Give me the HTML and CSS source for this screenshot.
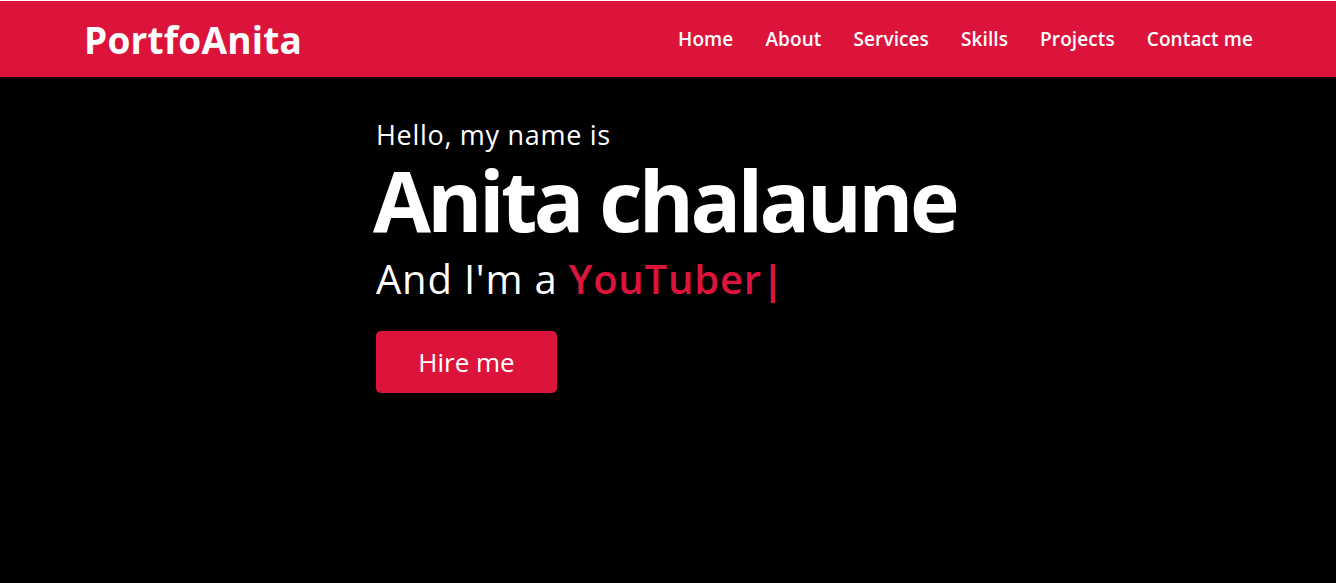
FILE: index.html
```html
<!DOCTYPE html>
<html lang="en">
<head>
<meta charset="utf-8">
<title>PortfoAnita</title>
<link rel="stylesheet" href="styles.css">
</head>
<body>
<nav class="navbar">
  <div class="logo">PortfoAnita</div>
  <ul class="menu">
    <li><a href="#">Home</a></li>
    <li><a href="#">About</a></li>
    <li><a href="#">Services</a></li>
    <li><a href="#">Skills</a></li>
    <li><a href="#">Projects</a></li>
    <li><a href="#">Contact me</a></li>
  </ul>
</nav>
<section class="home">
  <div class="home-content">
    <div class="text-1">Hello, my name is</div>
    <div class="text-2">Anita chalaune</div>
    <div class="text-3">And I'm a <span class="typing">YouTuber</span><span class="cursor">|</span></div>
    <a class="hire" href="#">Hire me</a>
  </div>
</section>
</body>
</html>
```

FILE: styles.css
```css
* { box-sizing: border-box; margin: 0; padding: 0; }
html, body { height: 100%; }
body {
  background: #000;
  font-family: "Open Sans", "Noto Sans", sans-serif;
  color: #fff;
  display: flex;
  flex-direction: column;
}
.navbar {
  border-top: 1px solid #fff;
  background: #dc143c;
  height: 77px;
  display: flex;
  align-items: center;
  justify-content: space-between;
  padding: 0 83px 0 84px;
}
.logo {
  font-size: 37px;
  font-weight: 700;
  letter-spacing: 0.2px;
  color: #fff;
}
.menu {
  list-style: none;
  display: flex;
  gap: 32px;
  margin-top: -1px;
}
.menu a {
  color: #fff;
  text-decoration: none;
  font-size: 19px;
  font-weight: 600;
  letter-spacing: 0.1px;
}
.home {
  flex: 1;
  background: #000;
  padding: 40px 0 0 376px;
}
.home-content {
  display: flex;
  flex-direction: column;
  align-items: flex-start;
}
.text-1 {
  font-size: 27px;
  line-height: 36px;
  letter-spacing: 0.7px;
}
.text-2 {
  font-size: 84px;
  font-weight: 700;
  line-height: 94px;
  letter-spacing: -3.6px;
  margin-left: -3px;
}
.text-3 {
  margin-top: 5px;
  font-size: 40px;
  line-height: 54px;
  letter-spacing: 0.8px;
}
.typing { color: #dc143c; font-weight: 600; }
.cursor { color: #dc143c; font-weight: 700; }
.hire {
  margin-top: 25px;
  width: 181px;
  height: 62px;
  border-radius: 5px;
  background: #dc143c;
  color: #fff;
  text-decoration: none;
  font-size: 26px;
  display: flex;
  align-items: center;
  justify-content: center;
}
```
